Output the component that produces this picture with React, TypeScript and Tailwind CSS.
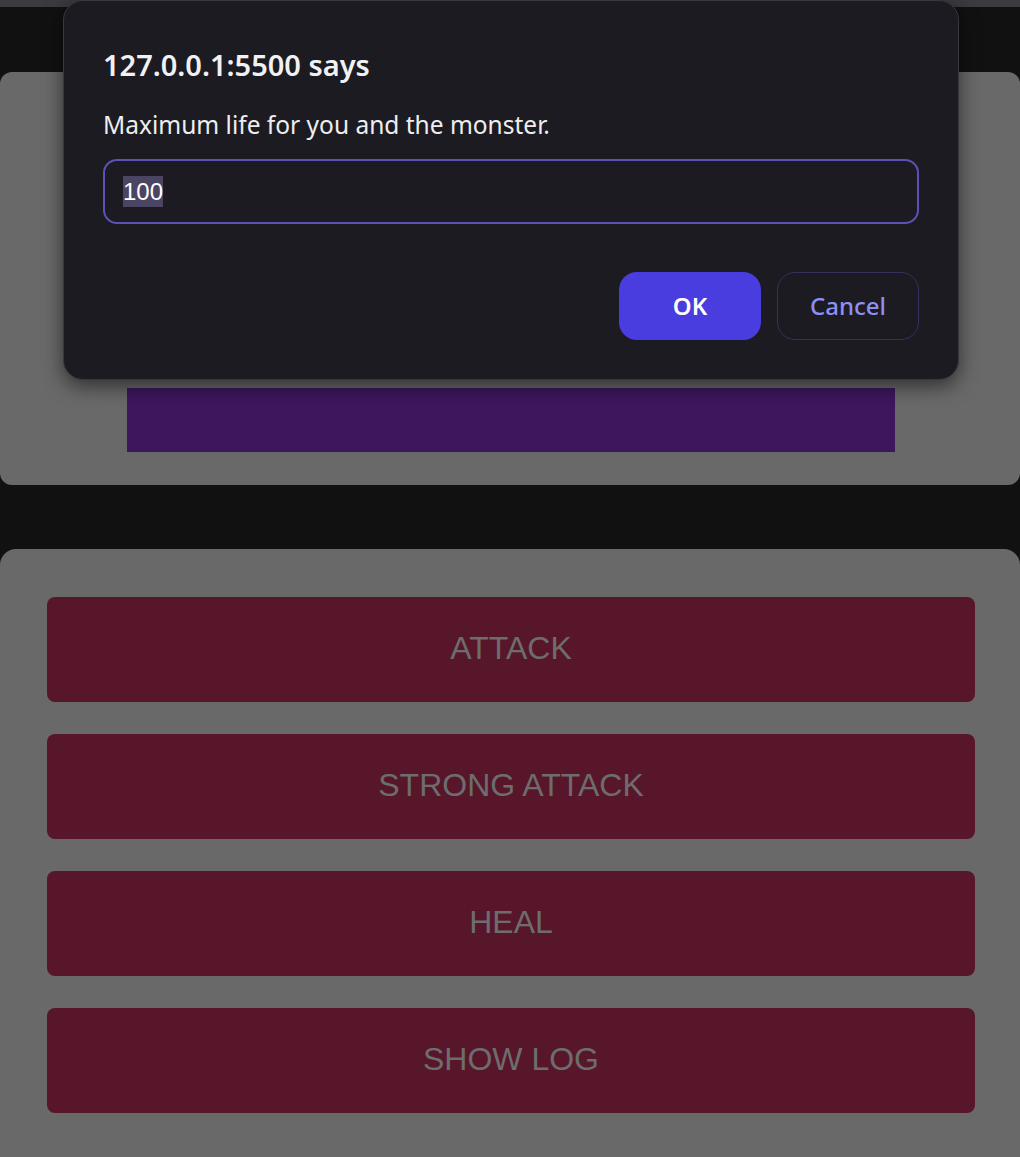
export default function App() {
  const actions = ['ATTACK', 'STRONG ATTACK', 'HEAL', 'SHOW LOG'];

  return (
    <div className="relative min-h-[1157px] w-[1020px] overflow-hidden bg-[#111111]">
      {/* dimmed page behind the prompt */}
      <div className="h-[7px] bg-[#3b3b3f]" />
      <div className="pt-[65px]">
        <section className="flex h-[413px] flex-col items-center justify-end rounded-[12px] bg-[#696969] pb-[33px] pl-[2px]">
          <div className="h-[64px] w-[768px] bg-[#3d165e]" />
        </section>
      </div>
      <section className="mt-[64px] flex flex-col gap-[32px] rounded-t-[16px] bg-[#696969] pl-[47px] pr-[45px] pt-[48px] pb-[44px]">
        {actions.map((label) => (
          <button
            key={label}
            className="flex h-[105px] items-center justify-center rounded-[8px] bg-[#58162a] pb-[3px] text-[32px] text-[#6d6d6d]"
            style={{ fontFamily: '"Liberation Sans", Arial, sans-serif' }}
          >
            {label}
          </button>
        ))}
      </section>

      {/* prompt dialog */}
      <div
        className="absolute left-[63px] top-0 w-[896px] h-[380px] rounded-[20px] border border-[#38383e] bg-[#1c1b21] px-[39px] pt-[44px] shadow-[0_6px_20px_rgba(0,0,0,0.55)]"
        style={{ fontFamily: '"Noto Sans", "Open Sans", sans-serif' }}
      >
        <h1 className="text-[29px] font-semibold leading-[40px] text-[#f1f1f3]">127.0.0.1:5500 says</h1>
        <p className="mt-[27px] text-[24.5px] leading-[26px] text-[#eeeef0]">Maximum life for you and the monster.</p>
        <div className="mt-[21px] flex h-[65px] items-center rounded-[14px] border-2 border-[#5a52b6] px-[18px]">
          <span
            className="bg-[#4a4563] text-[24px] leading-[31px] text-white"
            style={{ fontFamily: '"Liberation Sans", Arial, sans-serif' }}
          >
            100
          </span>
        </div>
        <div className="mt-[48px] flex justify-end gap-[16px]">
          <button className="h-[68px] w-[142px] rounded-[18px] bg-[#4a3de0] text-[24px] font-semibold text-white">
            OK
          </button>
          <button className="h-[68px] w-[142px] rounded-[18px] border border-[#34325e] text-[24px] font-medium text-[#8d8ff2]">
            Cancel
          </button>
        </div>
      </div>
    </div>
  );
}
